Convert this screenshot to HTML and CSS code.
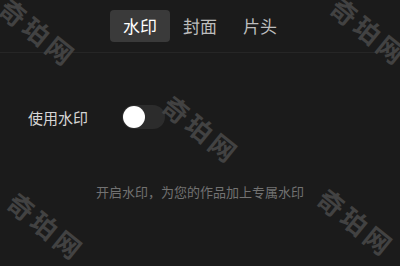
FILE: index.html
```html
<!DOCTYPE html>
<html lang="zh-CN">
<head>
    <meta charset="UTF-8">
    <meta name="viewport" content="width=device-width, initial-scale=1.0">
    <title>水印设置</title>
    <link rel="stylesheet" href="styles.css">
</head>
<body>
    <div id="app">
        <div class="tabs">
            <div class="tab active">水印</div>
            <div class="tab">封面</div>
            <div class="tab">片头</div>
        </div>

        <div class="setting-row">
            <span class="setting-label">使用水印</span>
            <div class="switch">
                <div class="knob"></div>
            </div>
        </div>

        <p class="hint">开启水印，为您的作品加上专属水印</p>

        <!-- 图片水印 -->
        <div class="wm wm-1">奇珀网</div>
        <div class="wm wm-2">奇珀网</div>
        <div class="wm wm-3">奇珀网</div>
        <div class="wm wm-4">奇珀网</div>
        <div class="wm wm-5">奇珀网</div>
    </div>
</body>
</html>
```

FILE: styles.css
```css
body {
    margin: 0;
    background: #1b1b1b;
    font-family: "Noto Sans CJK SC", "Noto Sans", sans-serif;
}

#app {
    position: relative;
    width: 400px;
    height: 266px;
    overflow: hidden;
}

.tabs {
    display: flex;
    justify-content: center;
    padding-top: 10px;
    height: 53px;
    box-sizing: border-box;
    border-bottom: 1px solid #262626;
}

.tab {
    width: 60px;
    height: 32px;
    line-height: 32px;
    text-align: center;
    font-size: 17px;
    color: #bdbdbd;
    border-radius: 4px;
}

.tab.active {
    background: #3a3a3a;
    color: #fff;
}

.setting-row {
    display: flex;
    align-items: center;
    padding: 52px 0 0 28px;
}

.setting-label {
    width: 60px;
    font-size: 15px;
    color: #d6d6d6;
    margin-right: 34px;
}

.switch {
    width: 43px;
    height: 24px;
    border-radius: 12px;
    background: #2c2c2c;
    display: flex;
    align-items: center;
    padding: 0 1px;
    box-sizing: border-box;
}

.knob {
    width: 22px;
    height: 22px;
    border-radius: 50%;
    background: #fff;
}

.hint {
    margin: 53px 0 0;
    text-align: center;
    font-size: 13px;
    color: #727272;
}

/* 水印 */
.wm {
    position: absolute;
    width: 110px;
    margin-left: -55px;
    margin-top: -16px;
    line-height: 32px;
    text-align: center;
    white-space: nowrap;
    font-size: 26px;
    font-weight: bold;
    color: #424242;
    letter-spacing: 4px;
    text-indent: 4px;
    transform: rotate(39deg);
}

.wm-1 { left: 37px; top: 31px; }
.wm-2 { left: 368px; top: 30px; }
.wm-3 { left: 200px; top: 128px; }
.wm-4 { left: 45px; top: 225px; }
.wm-5 { left: 355px; top: 221px; }
```
